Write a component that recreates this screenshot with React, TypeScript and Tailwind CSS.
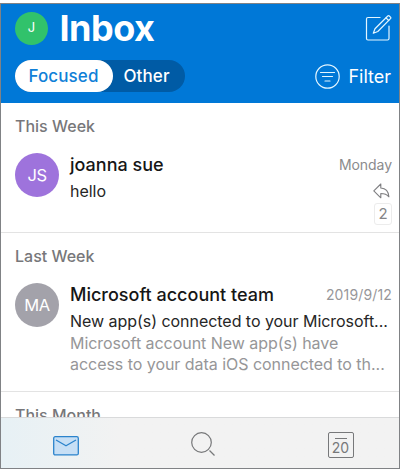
import React from "react";

type Message = {
  sender: string;
  initials: string;
  avatar: string;
  date: string;
  dateClass: string;
  subject: string;
  preview?: string[];
  count?: number;
};

type Section = {
  title: string;
  height: string;
  message: Message;
};

const sections: Section[] = [
  {
    title: "This Week",
    height: "h-[130px]",
    message: {
      sender: "joanna sue",
      initials: "JS",
      avatar: "bg-[#9e73dc]",
      date: "Monday",
      dateClass: "text-[#8b8b8d] text-[14px] tracking-[-0.05px]",
      subject: "hello",
      count: 2,
    },
  },
  {
    title: "Last Week",
    height: "h-[159px]",
    message: {
      sender: "Microsoft account team",
      initials: "MA",
      avatar: "bg-[#a3a2aa]",
      date: "2019/9/12",
      dateClass: "text-[#97979a] text-[14px] tracking-[0.15px]",
      subject: "New app(s) connected to your Microsoft...",
      preview: ["Microsoft account New app(s) have", "access to your data iOS connected to th..."],
    },
  },
];

function ComposeIcon() {
  return (
    <svg width="28" height="28" viewBox="0 0 28 28" fill="none" stroke="#e4f6ff" strokeWidth="1.2" strokeLinecap="round" strokeLinejoin="round">
      <path d="M16 3.500H4Q2.500 3.500 2.500 5V24.500Q2.500 26 4 26H23.500Q25 26 25 24.500V12" />
      <path d="M9.300 19.200L11 14.700L23.800 2Q24.500 1.300 25.300 2L26.500 3.200Q27.200 4 26.500 4.700L13.800 17.500Z" />
      <path d="M22 3.800L24.700 6.500" />
    </svg>
  );
}

function FilterIcon() {
  return (
    <svg width="25" height="25" viewBox="0 0 25 25" fill="none" stroke="#e4f6ff" strokeWidth="1.2" strokeLinecap="round">
      <circle cx="12.500" cy="12.500" r="11.700" />
      <path d="M5.500 8.500H19.500M7.500 12.500H17.500M10 17H15" />
    </svg>
  );
}

function ReplyIcon() {
  return (
    <svg className="mr-[2px]" width="17" height="16" viewBox="0 0 17 16" fill="none" stroke="#7e7e81" strokeWidth="1.100" strokeLinejoin="round">
      <path d="M0.800 7.800L7.800 1V5C12.800 5.300 15.500 8 15.900 13.800C13.800 11.300 11.500 10.500 7.800 10.500V14.800Z" />
    </svg>
  );
}

function MessageRow({ message }: { message: Message }) {
  return (
    <div className="flex pl-[14px] pr-[7px]">
      <div className={`mt-[2px] flex size-11 shrink-0 items-center justify-center rounded-full text-[16.5px] text-white tracking-[-0.4px] ${message.avatar}`}>
        {message.initials}
      </div>
      <div className="ml-[11px] min-w-0 flex-1">
        <div className="flex h-[26px] items-center justify-between whitespace-nowrap">
          <span className="text-[18px] font-medium text-[#161616]">{message.sender}</span>
          <span className={message.dateClass}>{message.date}</span>
        </div>
        <div className="flex h-[26px] items-center justify-between whitespace-nowrap pt-px text-[16px] tracking-[-0.04px] text-[#262626]">
          <span>{message.subject}</span>
          {message.count && <ReplyIcon />}
        </div>
        {message.preview && (
          <div className="whitespace-nowrap text-[16px] leading-[21px] tracking-[-0.04px] text-[#969698]">
            {message.preview.map((line) => (
              <div key={line}>{line}</div>
            ))}
          </div>
        )}
        {message.count && (
          <div className="flex justify-end">
            <span className="flex h-[22px] w-[18px] items-center justify-center rounded-[3px] border border-[#ececec] text-[15px] text-[#858587]">
              {message.count}
            </span>
          </div>
        )}
      </div>
    </div>
  );
}

export default function App() {
  return (
    <div className="h-[470px] w-[400px] overflow-hidden bg-white pt-[3px] font-['Inter','Liberation_Sans',sans-serif]">
      <div className="flex h-[466px] flex-col border border-[#808285] bg-white">
        <header className="h-[99px] shrink-0 bg-[#0078d7] pl-[14px] pr-[7px] text-white">
          <div className="flex h-[48px] items-center">
            <div className="flex size-[33px] items-center justify-center rounded-full bg-[#31c26b] text-[13px]">J</div>
            <h1 className="-mt-px ml-[11.5px] flex-1 text-[36px] font-bold leading-[48px] tracking-[-0.5px]">Inbox</h1>
            <ComposeIcon />
          </div>
          <div className="mt-[8px] flex h-8 items-center justify-between">
            <div className="flex h-8 w-[170px] rounded-full bg-[#005ba5] text-[17px] font-medium">
              <div className="flex w-[98px] items-center justify-center rounded-full bg-white pt-px pr-px tracking-[0.1px] text-[#0f80d8]">Focused</div>
              <div className="flex flex-1 items-center justify-center pt-px pr-[5px] tracking-[0.1px]">Other</div>
            </div>
            <div className="flex items-center gap-2 text-[18px]">
              <FilterIcon />
              <span className="pr-px">Filter</span>
            </div>
          </div>
        </header>

        <main className="min-h-0 flex-1 overflow-hidden">
          {sections.map((section) => (
            <section key={section.title} className={`border-b border-[#e3e3e3] ${section.height}`}>
              <h2 className="h-[48px] pl-[14px] pt-[11px] text-[16px] font-medium leading-6 text-[#77777a]">{section.title}</h2>
              <MessageRow message={section.message} />
            </section>
          ))}
          <h2 className="pl-[14px] pt-[11px] text-[16px] font-medium leading-6 text-[#77777a]">This Month</h2>
        </main>

        <nav className="flex h-[51px] shrink-0 items-center border-t border-[#d9dadb] bg-linear-to-r from-[#e7f1f5] to-[#f2f2f2] to-30% pt-[3px]">
          <div className="flex w-[130px] justify-center pt-[2px]">
            <svg width="26" height="20" viewBox="0 0 26 20" fill="#c7dff5" stroke="#2b83cc" strokeWidth="1.300" strokeLinejoin="round">
              <rect x="0.700" y="0.700" width="24.600" height="18.200" rx="1.500" />
              <path d="M3 4L13 9.800L23 4" fill="none" />
            </svg>
          </div>
          <div className="flex flex-1 justify-center pr-[6px]">
            <svg width="25" height="25" viewBox="0 0 25 25" fill="none" stroke="#77787a" strokeWidth="1.200">
              <circle cx="10.500" cy="10.500" r="9.800" />
              <path d="M18.500 18.500L23.500 23.500" />
            </svg>
          </div>
          <div className="flex w-[117px] justify-center">
            <div className="flex size-[26px] flex-col items-center rounded-[2px] border border-[#77787a] pt-[5px] text-[14px] leading-[18px] text-[#77787a]">
              <div className="h-px w-3 shrink-0 bg-[#77787a]" />
              20
            </div>
          </div>
        </nav>
      </div>
    </div>
  );
}
